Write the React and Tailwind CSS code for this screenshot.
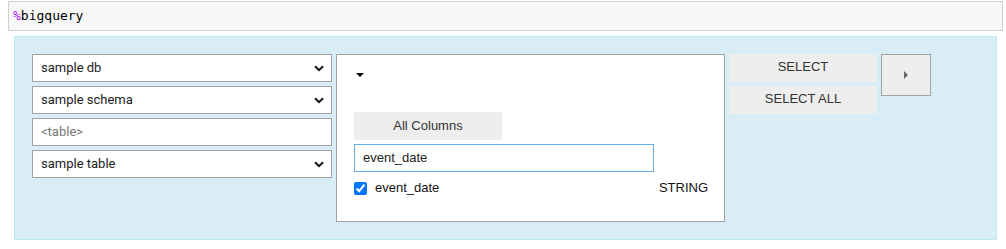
import React from "react";

const Chevron = () => (
  <svg width="10" height="7" viewBox="0 0 10 7" className="shrink-0">
    <path d="M1 1.2 L5 5.2 L9 1.2" fill="none" stroke="#111" strokeWidth="2" />
  </svg>
);

const SelectBox = ({ label }) => (
  <div className="flex h-[28px] items-center justify-between border border-[#a2a2a2] bg-white pl-[8px] pr-[7px] text-[13px] text-[#222]" style={{ fontFamily: "Roboto, 'Noto Sans', sans-serif" }}>
    <span>{label}</span>
    <Chevron />
  </div>
);

export default function App() {
  return (
    <div className="relative h-[249px] w-[1006px] bg-white">
      <div className="ml-[8px] mt-[1px] flex h-[30px] w-[995px] items-center border border-[#cfcfcf] bg-[#f7f7f7] pl-[4px] text-[13px] text-black" style={{ fontFamily: "'DejaVu Sans Mono', monospace" }}>
        <span className="text-[#aa22ff]">%</span>bigquery
      </div>
      <div className="ml-[14px] mt-[5px] flex h-[204px] w-[983px] items-start gap-[4px] border border-[#bce8f1] bg-[#d9edf7] pl-[17px] pt-[17px]">
        <div className="flex w-[300px] flex-col gap-[4px]">
          <SelectBox label="sample db" />
          <SelectBox label="sample schema" />
          <div className="flex h-[28px] items-center border border-[#a2a2a2] bg-white pl-[8px] text-[13px] text-[#777]" style={{ fontFamily: "Roboto, 'Noto Sans', sans-serif" }}>
            &lt;table&gt;
          </div>
          <SelectBox label="sample table" />
        </div>
        <div className="flex h-[168px] w-[389px] flex-col border border-[#a2a2a2] bg-white pl-[17px] pr-[17px]" style={{ fontFamily: "'Liberation Sans', Arial, sans-serif" }}>
          <div className="mt-[18px] ml-[2px] h-0 w-0 border-x-[4px] border-t-[4px] border-x-transparent border-t-black" />
          <div className="mt-[35px] flex h-[28px] w-[148px] items-center justify-center bg-[#eeeeee] text-[13px] text-[#333]">
            All Columns
          </div>
          <div className="mt-[4px] flex h-[28px] w-[300px] items-center border border-[#66afe9] pl-[8px] text-[13px] text-[#222]">
            event_date
          </div>
          <div className="mt-[9px] flex h-[14px] items-center text-[13px] text-[#111]">
            <input type="checkbox" defaultChecked className="m-0 h-[13px] w-[13px] accent-[#0075ff]" />
            <span className="ml-[8px]">event_date</span>
            <span className="ml-auto mr-[-1px]">STRING</span>
          </div>
        </div>
        <div className="flex w-[148px] flex-col gap-[4px]" style={{ fontFamily: "'Liberation Sans', Arial, sans-serif" }}>
          <div className="flex h-[28px] items-center justify-center bg-[#eeeeee] pb-[2px] text-[13px] text-[#333]">SELECT</div>
          <div className="flex h-[28px] items-center justify-center bg-[#eeeeee] pb-[2px] text-[13px] text-[#333]">SELECT ALL</div>
        </div>
        <div className="flex h-[42px] w-[50px] items-center justify-center border border-[#a2a2a2] bg-[#eeeeee]">
          <div className="h-0 w-0 border-y-[4px] border-l-[4px] border-y-transparent border-l-[#666]" />
        </div>
      </div>
    </div>
  );
}
